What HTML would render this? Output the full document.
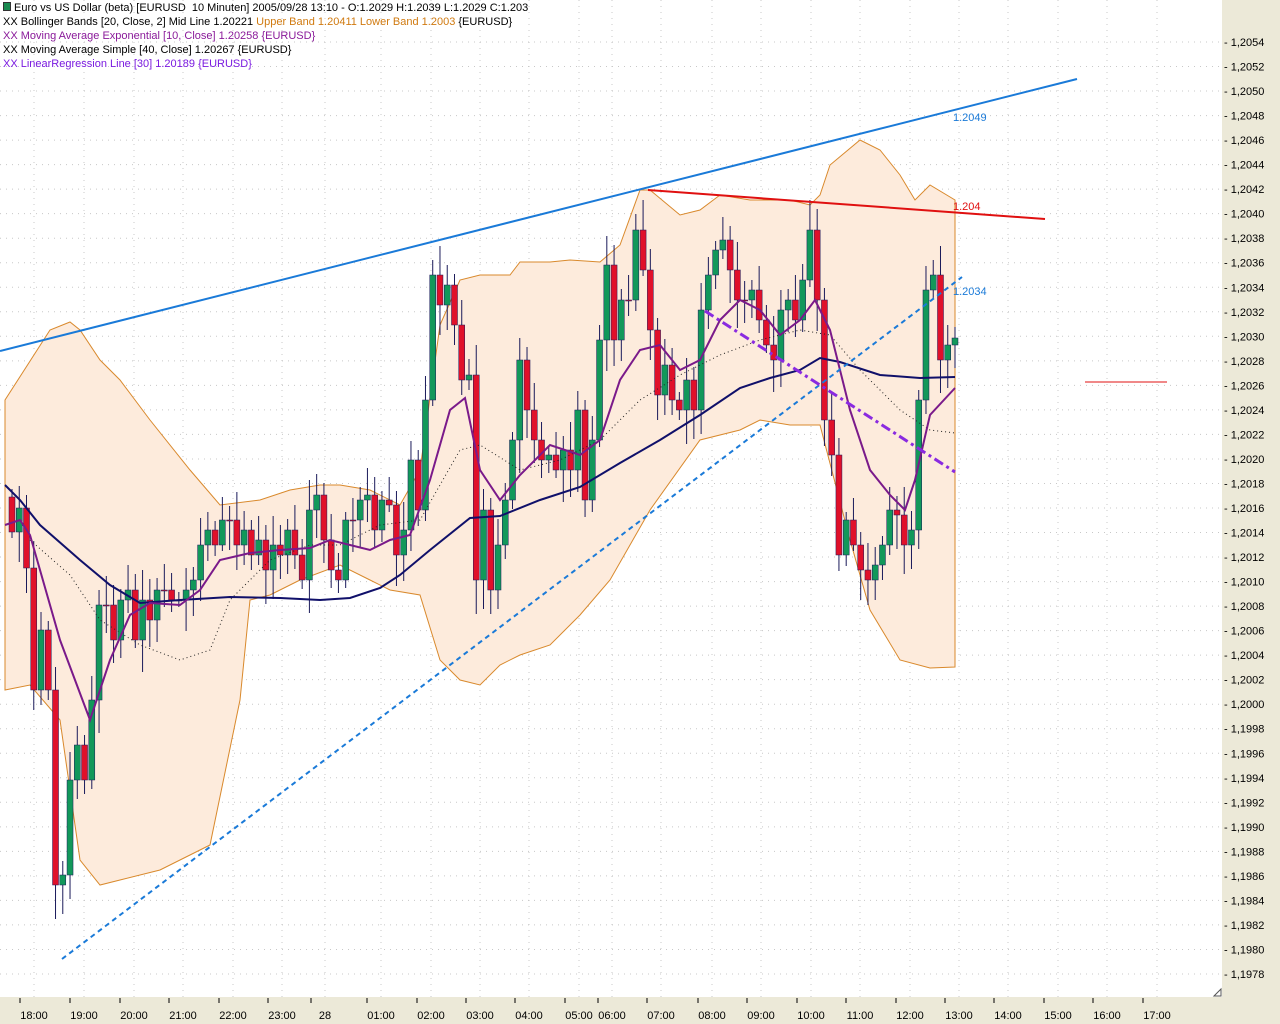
<!DOCTYPE html><html><head><meta charset="utf-8"><style>
body{margin:0;width:1280px;height:1024px;overflow:hidden;background:#ece9d8;font-family:"Liberation Sans",sans-serif}
svg{position:absolute;left:0;top:0}
.lg{position:absolute;left:3px;font-size:11px;line-height:14px;white-space:nowrap}
</style></head><body>
<svg id="s" width="1280" height="1024" xmlns="http://www.w3.org/2000/svg">
<rect x="0" y="0" width="1222" height="997" fill="#fff"/>
<g id="grid"></g>
<path id="band" fill="#fdebdc" stroke="#d9892c" stroke-width="1"/>
<g id="cd"></g>
<polyline id="mid" fill="none" stroke="#222" stroke-width="1" stroke-dasharray="1,3"/>
<polyline id="sma" fill="none" stroke="#10106a" stroke-width="2"/>
<polyline id="ema" fill="none" stroke="#7a1a8a" stroke-width="2"/>
<line x1="0" y1="351" x2="1077" y2="79" stroke="#1a7ad8" stroke-width="2"/>
<line x1="648" y1="190" x2="1045" y2="219" stroke="#e01010" stroke-width="2"/>
<line x1="62" y1="959" x2="962" y2="277" stroke="#1a7ad8" stroke-width="2" stroke-dasharray="5,4"/>
<line x1="705" y1="311" x2="955" y2="472" stroke="#8a2ae0" stroke-width="3" stroke-dasharray="10,4,3,4"/>
<line x1="1085" y1="382" x2="1167" y2="382" stroke="#e01010" stroke-width="1"/>
<text x="953" y="121" font-size="11" fill="#1a7ad8">1.2049</text>
<text x="953" y="210" font-size="11" fill="#e01010">1.204</text>
<text x="953" y="295" font-size="11" fill="#1a7ad8">1.2034</text>
<g id="ax" font-size="11" fill="#000"></g>
<path d="M1214 996 L1221 989 L1221 996 Z" fill="#fff" stroke="#555"/>
</svg>
<div class="lg" style="top:1px"><span style="display:inline-block;width:6px;height:7px;background:#1a8a50;border:1px solid #333;margin-right:3px"></span>Euro vs US Dollar (beta) [EURUSD&nbsp; 10 Minuten] 2005/09/28 13:10 - O:1.2029 H:1.2039 L:1.2029 C:1.203</div>
<div class="lg" style="top:15px">XX Bollinger Bands [20, Close, 2] Mid Line 1.20221 <span style="color:#d07a10">Upper Band 1.20411 Lower Band 1.2003</span> {EURUSD}</div>
<div class="lg" style="top:29px;color:#8a1a9a">XX Moving Average Exponential [10, Close] 1.20258 {EURUSD}</div>
<div class="lg" style="top:43px">XX Moving Average Simple [40, Close] 1.20267 {EURUSD}</div>
<div class="lg" style="top:57px;color:#7a1ae0">XX LinearRegression Line [30] 1.20189 {EURUSD}</div>
<script>
const NS="http://www.w3.org/2000/svg";
function el(p,t,a,txt){const e=document.createElementNS(NS,t);for(const k in a)e.setAttribute(k,a[k]);if(txt)e.textContent=txt;p.appendChild(e);return e;}
const g=document.getElementById('grid'),ax=document.getElementById('ax');
for(let i=0;i<=38;i++){const y=42+i*24.526;const p=(1.2054-i*0.0002).toFixed(4).replace('.',',');
el(g,'line',{x1:0,y1:y,x2:1222,y2:y,stroke:'#c8c8c8','stroke-dasharray':'1,5'});
el(ax,'text',{x:1224,y:y+4},'- '+p);}
const xl=[[34,'18:00'],[84,'19:00'],[134,'20:00'],[183,'21:00'],[233,'22:00'],[282,'23:00'],[325,'28'],[381,'01:00'],[431,'02:00'],[480,'03:00'],[529,'04:00'],[579,'05:00'],[612,'06:00'],[661,'07:00'],[712,'08:00'],[761,'09:00'],[811,'10:00'],[860,'11:00'],[910,'12:00'],[959,'13:00'],[1008,'14:00'],[1058,'15:00'],[1107,'16:00'],[1157,'17:00']];
xl.forEach(([x,t])=>{el(g,'line',{x1:x,y1:0,x2:x,y2:997,stroke:'#c8c8c8','stroke-dasharray':'1,5'});
el(ax,'line',{x1:x-14,y1:998,x2:x-14,y2:1003,stroke:'#000'});
el(ax,'text',{x:x,y:1019,'text-anchor':'middle'},t);});
function pts(a){let s='';for(let i=0;i<a.length;i+=2)s+=a[i]+','+a[i+1]+' ';return s;}
const up=[5,400,50,330,70,322,80,330,100,360,120,380,150,420,190,470,220,505,260,500,290,490,320,485,340,485,370,490,400,505,420,470,440,325,460,280,480,275,510,275,520,262,550,262,570,260,600,262,620,245,640,190,650,190,680,215,700,210,720,195,750,200,790,200,810,205,820,195,830,165,860,140,880,150,900,175,915,200,930,185,955,200];
const lo=[5,690,30,685,60,720,80,860,100,885,120,880,160,870,190,855,210,845,240,700,250,600,270,595,300,580,340,565,370,580,390,590,420,595,440,660,460,680,480,685,500,665,520,655,550,645,580,615,610,580,650,510,700,440,740,430,760,420,790,425,820,425,850,540,870,610,900,660,930,668,955,667];
let d='M'+up[0]+' '+up[1];for(let i=2;i<up.length;i+=2)d+=' L'+up[i]+' '+up[i+1];
for(let i=lo.length-2;i>=0;i-=2)d+=' L'+lo[i]+' '+lo[i+1];d+='Z';
document.getElementById('band').setAttribute('d',d);
document.getElementById('sma').setAttribute('points',pts([5,485,20,500,40,525,80,560,110,585,140,603,180,600,230,597,280,598,320,600,350,598,380,588,400,575,430,550,470,518,500,516,540,500,580,487,620,463,660,440,700,415,740,388,770,378,800,370,820,358,840,362,880,375,920,378,955,377]));
document.getElementById('ema').setAttribute('points',pts([5,525,20,520,30,535,60,640,90,720,110,660,130,615,150,603,180,605,200,590,220,560,250,553,280,550,310,548,330,540,350,545,370,550,390,540,410,535,430,480,450,410,465,398,480,470,500,500,520,475,550,445,580,455,600,440,620,380,640,350,660,345,680,370,700,360,720,320,740,300,760,310,780,335,800,320,815,300,830,330,850,410,870,470,890,495,905,510,915,480,930,415,955,388]));
document.getElementById('mid').setAttribute('points',pts([30,540,70,575,100,620,140,645,180,660,210,650,230,600,270,560,310,545,340,545,380,525,420,520,460,450,480,445,520,470,560,460,600,440,640,400,680,375,720,355,760,340,800,330,830,335,860,370,880,390,900,410,930,430,955,433]));
const cl=[532,508,568,690,630,690,885,875, 780,745,780,700,605,605,640, 600,590,640,600,620,590, 590,600,600,590,580,545,530, 545,520,520,545,530,555,540, 570,545,555,530,555,580,510, 495,540,570,580,520,520,500, 495,530,500,505,555,530,460, 510,400,275,305,285,325,380, 375,580,510,590,545,500,440, 360,410,440,460,455,470,450, 470,410,500,440,340,265,340, 300,300,230,270,330,395,365, 400,410,380,410,310,275,250, 240,270,300,300,290,320,345, 360,310,300,320,280,230,300, 420,455,555,520,545,570,580, 565,545,510,515,545,530,400, 290,275,360,345,338];
const cd=document.getElementById('cd');const N=cl.length;let o=497;
for(let i=0;i<N;i++){const x=12+i*(943/(N-1));const c=cl[i];const t=Math.min(o,c),b=Math.max(o,c);
const w1=8+((i*37)%23),w2=6+((i*53)%29);
el(cd,'line',{x1:x,y1:t-w1,x2:x,y2:b+w2,stroke:'#1a1a5a','stroke-width':1});
el(cd,'rect',{x:x-3,y:t,width:6,height:Math.max(b-t,1),fill:c<o?'#12985a':'#e0102a',stroke:'#1a1a5a','stroke-width':0.5});
o=c;}
</script>
</body></html>
